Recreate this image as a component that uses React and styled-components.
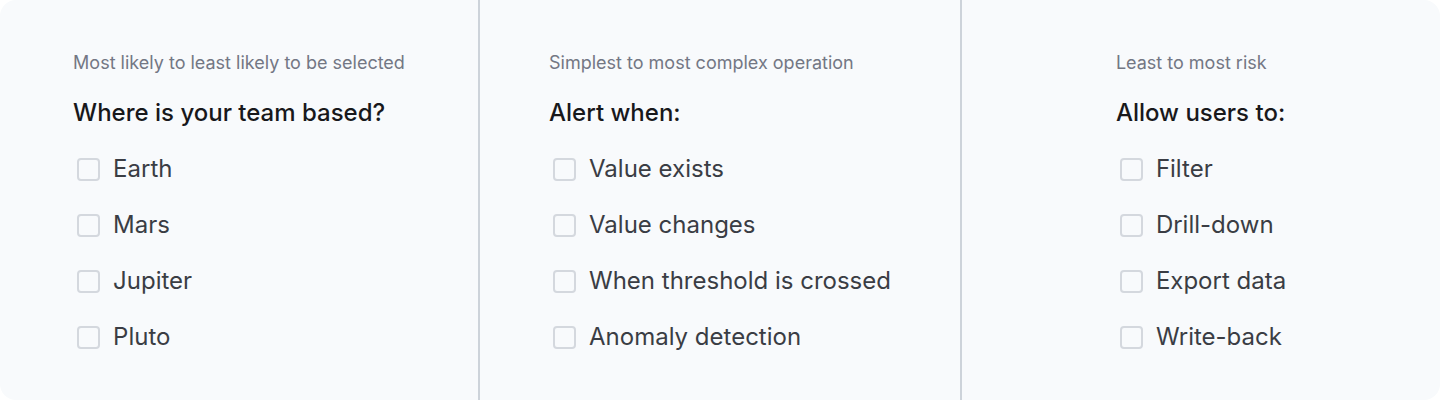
import React from 'react';
import styled, { createGlobalStyle } from 'styled-components';

const GlobalStyle = createGlobalStyle`
  html, body {
    margin: 0;
    padding: 0;
    background: #ffffff;
  }
  body {
    font-family: Inter, "Noto Sans", sans-serif;
  }
`;

const Card = styled.div`
  width: 1440px;
  height: 400px;
  box-sizing: border-box;
  background: #f8fafc;
  border-radius: 16px;
  display: grid;
  grid-template-columns: 478px 482px 480px;
  overflow: hidden;
`;

const Column = styled.section`
  display: flex;
  justify-content: center;
  box-sizing: border-box;
  border-left: ${({ $divider }) => ($divider ? '2px solid #cdd3da' : 'none')};
  padding-top: 51px;
`;

const Group = styled.div`
  display: flex;
  flex-direction: column;
  align-items: flex-start;
`;

const Hint = styled.p`
  margin: 0;
  font-size: 18px;
  line-height: 24px;
  color: #737784;
  font-weight: 400;
`;

const Question = styled.h3`
  margin: 22px 0 24px;
  font-size: 24px;
  line-height: 32px;
  font-weight: 500;
  color: #18181b;
`;

const OptionList = styled.div`
  display: flex;
  flex-direction: column;
  gap: 24px;
`;

const Option = styled.label`
  display: flex;
  align-items: center;
  gap: 13px;
  height: 32px;
  padding-left: 4px;
  font-size: 24px;
  line-height: 32px;
  color: #3a3d44;
  cursor: pointer;
`;

const Box = styled.span`
  width: 23px;
  height: 23px;
  box-sizing: border-box;
  border: 2px solid #d4d8de;
  border-radius: 4px;
  background: #f8fafc;
  flex-shrink: 0;
`;

const groups = [
  {
    hint: 'Most likely to least likely to be selected',
    question: 'Where is your team based?',
    options: ['Earth', 'Mars', 'Jupiter', 'Pluto'],
  },
  {
    hint: 'Simplest to most complex operation',
    question: 'Alert when:',
    options: ['Value exists', 'Value changes', 'When threshold is crossed', 'Anomaly detection'],
  },
  {
    hint: 'Least to most risk',
    question: 'Allow users to:',
    options: ['Filter', 'Drill-down', 'Export data', 'Write-back'],
  },
];

export default function App() {
  return (
    <>
      <GlobalStyle />
      <Card>
        {groups.map((g, i) => (
          <Column key={g.question} $divider={i > 0}>
            <Group>
              <Hint>{g.hint}</Hint>
              <Question>{g.question}</Question>
              <OptionList>
                {g.options.map((o) => (
                  <Option key={o}>
                    <Box />
                    {o}
                  </Option>
                ))}
              </OptionList>
            </Group>
          </Column>
        ))}
      </Card>
    </>
  );
}
